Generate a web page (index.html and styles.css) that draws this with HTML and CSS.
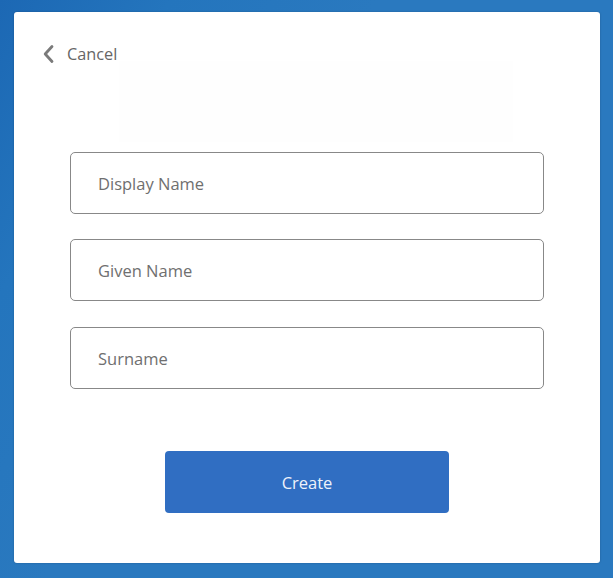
FILE: index.html
```html
<!DOCTYPE html>
<html>
<head>
<meta charset="utf-8">
<link rel="stylesheet" href="styles.css">
</head>
<body>
<div class="page">
  <div class="card">
    <div class="header">
      <a class="cancel" href="#">
        <svg class="chev" width="13" height="20" viewBox="0 0 13 20"><path d="M10 2.5 L3.2 10 L10 17.5" fill="none" stroke="#7a7a7a" stroke-width="2.8" stroke-linecap="round" stroke-linejoin="round"/></svg>
        <span>Cancel</span>
      </a>
    </div>
    <div class="ghost"></div>
    <form class="form">
      <input class="field" type="text" placeholder="Display Name">
      <input class="field" type="text" placeholder="Given Name">
      <input class="field" type="text" placeholder="Surname">
      <button class="create" type="button">Create</button>
    </form>
  </div>
</div>
</body>
</html>
```
FILE: styles.css
```css
html, body {
  margin: 0;
  padding: 0;
}
body {
  width: 613px;
  height: 578px;
  overflow: hidden;
  font-family: "Open Sans", "Noto Sans", sans-serif;
  background: linear-gradient(120deg, #1c68b4 0%, #2475bd 18%, #2a79bf 40%, #2a79bf 100%);
}
.page {
  box-sizing: border-box;
  height: 578px;
  padding: 12px 13px 15px 14px;
}
.card {
  box-sizing: border-box;
  height: 551px;
  background: #ffffff;
  border-radius: 3px;
  box-shadow: 0 0 2px rgba(0, 0, 0, 0.25);
  display: flex;
  flex-direction: column;
}
.header {
  height: 49px;
  padding: 0 0 0 28px;
}
.cancel {
  display: inline-flex;
  align-items: center;
  gap: 12px;
  margin-top: 29px;
  height: 26px;
  text-decoration: none;
  color: #666666;
  font-size: 16.3px;
}
.chev {
  display: block;
}
.ghost {
  width: 394px;
  height: 81px;
  margin: 0 0 10px 105px;
  background: #fefefe;
}
.form {
  margin: 0;
  padding: 0 56px;
  display: flex;
  flex-direction: column;
  align-items: center;
}
.field {
  box-sizing: border-box;
  width: 474px;
  height: 62px;
  margin: 0 0 25px 0;
  padding: 0 27px;
  border: 1px solid #888888;
  border-radius: 5px;
  background: #ffffff;
  font-family: "Open Sans", "Noto Sans", sans-serif;
  font-size: 16.5px;
  color: #333;
  outline: none;
}
.field:nth-of-type(2) {
  margin-bottom: 26px;
}
.field::placeholder {
  color: #6f6f6f;
}
.create {
  margin-top: 37px;
  width: 284px;
  height: 62px;
  border: none;
  border-radius: 4px;
  background: #306ec2;
  color: #eef3fb;
  font-family: "Open Sans", "Noto Sans", sans-serif;
  font-size: 16.5px;
  cursor: pointer;
}
```
